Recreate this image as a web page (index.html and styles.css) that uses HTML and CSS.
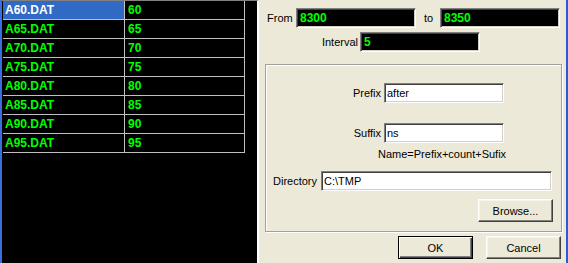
FILE: index.html
```html
<!DOCTYPE html>
<html>
  <head>
    <title>Sequence Export</title>
    <link rel="stylesheet" href="styles.css">
  </head>
  <body>
    <div class="window">
      <!-- file list -->
      <div class="list-panel">
        <div class="file-table">
          <div class="row selected"><div class="cell name">A60.DAT</div><div class="cell value">60</div></div>
          <div class="row"><div class="cell name">A65.DAT</div><div class="cell value">65</div></div>
          <div class="row"><div class="cell name">A70.DAT</div><div class="cell value">70</div></div>
          <div class="row"><div class="cell name">A75.DAT</div><div class="cell value">75</div></div>
          <div class="row"><div class="cell name">A80.DAT</div><div class="cell value">80</div></div>
          <div class="row"><div class="cell name">A85.DAT</div><div class="cell value">85</div></div>
          <div class="row"><div class="cell name">A90.DAT</div><div class="cell value">90</div></div>
          <div class="row"><div class="cell name">A95.DAT</div><div class="cell value">95</div></div>
        </div>
      </div>

      <!-- settings -->
      <div class="dialog">
        <div class="range-row">
          <span class="label from-label">From</span>
          <div class="field dark">8300</div>
          <span class="label to-label">to</span>
          <div class="field dark">8350</div>
        </div>
        <div class="interval-row">
          <span class="label interval-label">Interval</span>
          <div class="field dark">5</div>
        </div>

        <div class="group">
          <div class="name-row prefix-row">
            <span class="label name-label">Prefix</span>
            <div class="field light">after</div>
          </div>
          <div class="name-row suffix-row">
            <span class="label name-label">Suffix</span>
            <div class="field light">ns</div>
          </div>
          <div class="hint">Name=Prefix+count+Sufix</div>
          <div class="dir-row">
            <span class="label">Directory</span>
            <div class="field light dir-field">C:\TMP</div>
          </div>
          <div class="browse-row">
            <button class="btn">Browse...</button>
          </div>
        </div>

        <div class="button-row">
          <button class="btn default">OK</button>
          <button class="btn">Cancel</button>
        </div>
      </div>
    </div>
  </body>
</html>
```

FILE: styles.css
```css
body {
  margin: 0;
  width: 568px;
  height: 263px;
  overflow: hidden;
  font-family: "Liberation Sans", Arial, sans-serif;
  font-size: 11px;
  color: #000000;
}

.window {
  display: flex;
  height: 263px;
  border-left: 2px solid #3a6ee0;
  border-right: 2px solid #2a5bd6;
  box-sizing: border-box;
  background-color: #ece9d8;
}

.list-panel {
  width: 257px;
  background-color: #000000;
  border-top: 1px solid #808080;
  border-right: 2px solid #ffffff;
  padding-left: 1px;
  box-sizing: border-box;
}

.file-table {
  width: 241px;
  border-right: 1px solid #c0c0c0;
  border-bottom: 1px solid #c0c0c0;
}

.row {
  display: flex;
  height: 18px;
  border-top: 1px solid #c0c0c0;
}

.row:first-child {
  border-top: none;
  height: 18px;
}

.cell {
  font-weight: bold;
  font-size: 12px;
  color: #00ff00;
  line-height: 18px;
}

.name {
  width: 119px;
  padding-left: 2px;
  border-right: 1px solid #c0c0c0;
}

.value {
  padding-left: 3px;
}

.selected .name {
  background-color: #316ac5;
  color: #ffffff;
}

.dialog {
  width: 307px;
  padding: 8px 0 0 8px;
  box-sizing: border-box;
}

.label {
  white-space: nowrap;
}

.field {
  height: 20px;
  box-sizing: border-box;
  border: 1px solid;
  border-color: #808080 #ffffff #ffffff #808080;
  box-shadow: inset 1px 1px 0 #404040, inset -1px -1px 0 #d4d0c8;
  padding: 3px 0 0 3px;
  white-space: nowrap;
}

.dark {
  width: 120px;
  background-color: #000000;
  color: #00ff00;
  font-weight: bold;
  font-size: 12px;
  padding-top: 2px;
}

.light {
  width: 120px;
  background-color: #ffffff;
  padding-left: 2px;
}

.range-row {
  display: flex;
  align-items: center;
}

.from-label {
  width: 29px;
}

.to-label {
  width: 16px;
  margin-left: 8px;
}

.interval-row {
  display: flex;
  align-items: center;
  margin-top: 4px;
}

.interval-label {
  width: 93px;
  text-align: right;
  padding-right: 2px;
  box-sizing: border-box;
}

.group {
  width: 297px;
  height: 168px;
  margin-top: 12px;
  margin-left: -2px;
  box-sizing: border-box;
  border: 1px solid #a0a0a0;
  box-shadow: inset 1px 1px 0 #ffffff, 1px 1px 0 #ffffff;
  padding-top: 18px;
}

.name-row {
  display: flex;
  align-items: center;
}

.suffix-row {
  margin-top: 20px;
}

.name-label {
  width: 118px;
  text-align: right;
  padding-right: 3px;
  box-sizing: border-box;
}

.hint {
  margin-top: 5px;
  padding-left: 112px;
  line-height: 13px;
}

.dir-row {
  display: flex;
  align-items: center;
  margin-top: 10px;
  padding-left: 7px;
}

.dir-row .label {
  width: 48px;
}

.dir-field {
  width: 231px;
}

.browse-row {
  display: flex;
  justify-content: flex-end;
  margin-top: 8px;
  padding-right: 8px;
}

.btn {
  width: 75px;
  height: 23px;
  font-family: "Liberation Sans", Arial, sans-serif;
  font-size: 11px;
  color: #000000;
  background-color: #ece9d8;
  border: 1px solid;
  border-color: #ffffff #404040 #404040 #ffffff;
  box-shadow: inset -1px -1px 0 #808080, inset 1px 1px 0 #f4f3ee;
  padding: 0;
}

.btn.default {
  border: 1px solid #000000;
  box-shadow: inset 1px 1px 0 #ffffff, inset -1px -1px 0 #404040, inset -2px -2px 0 #808080;
}

.button-row {
  display: flex;
  gap: 13px;
  margin-top: 4px;
  padding-left: 131px;
}
```
